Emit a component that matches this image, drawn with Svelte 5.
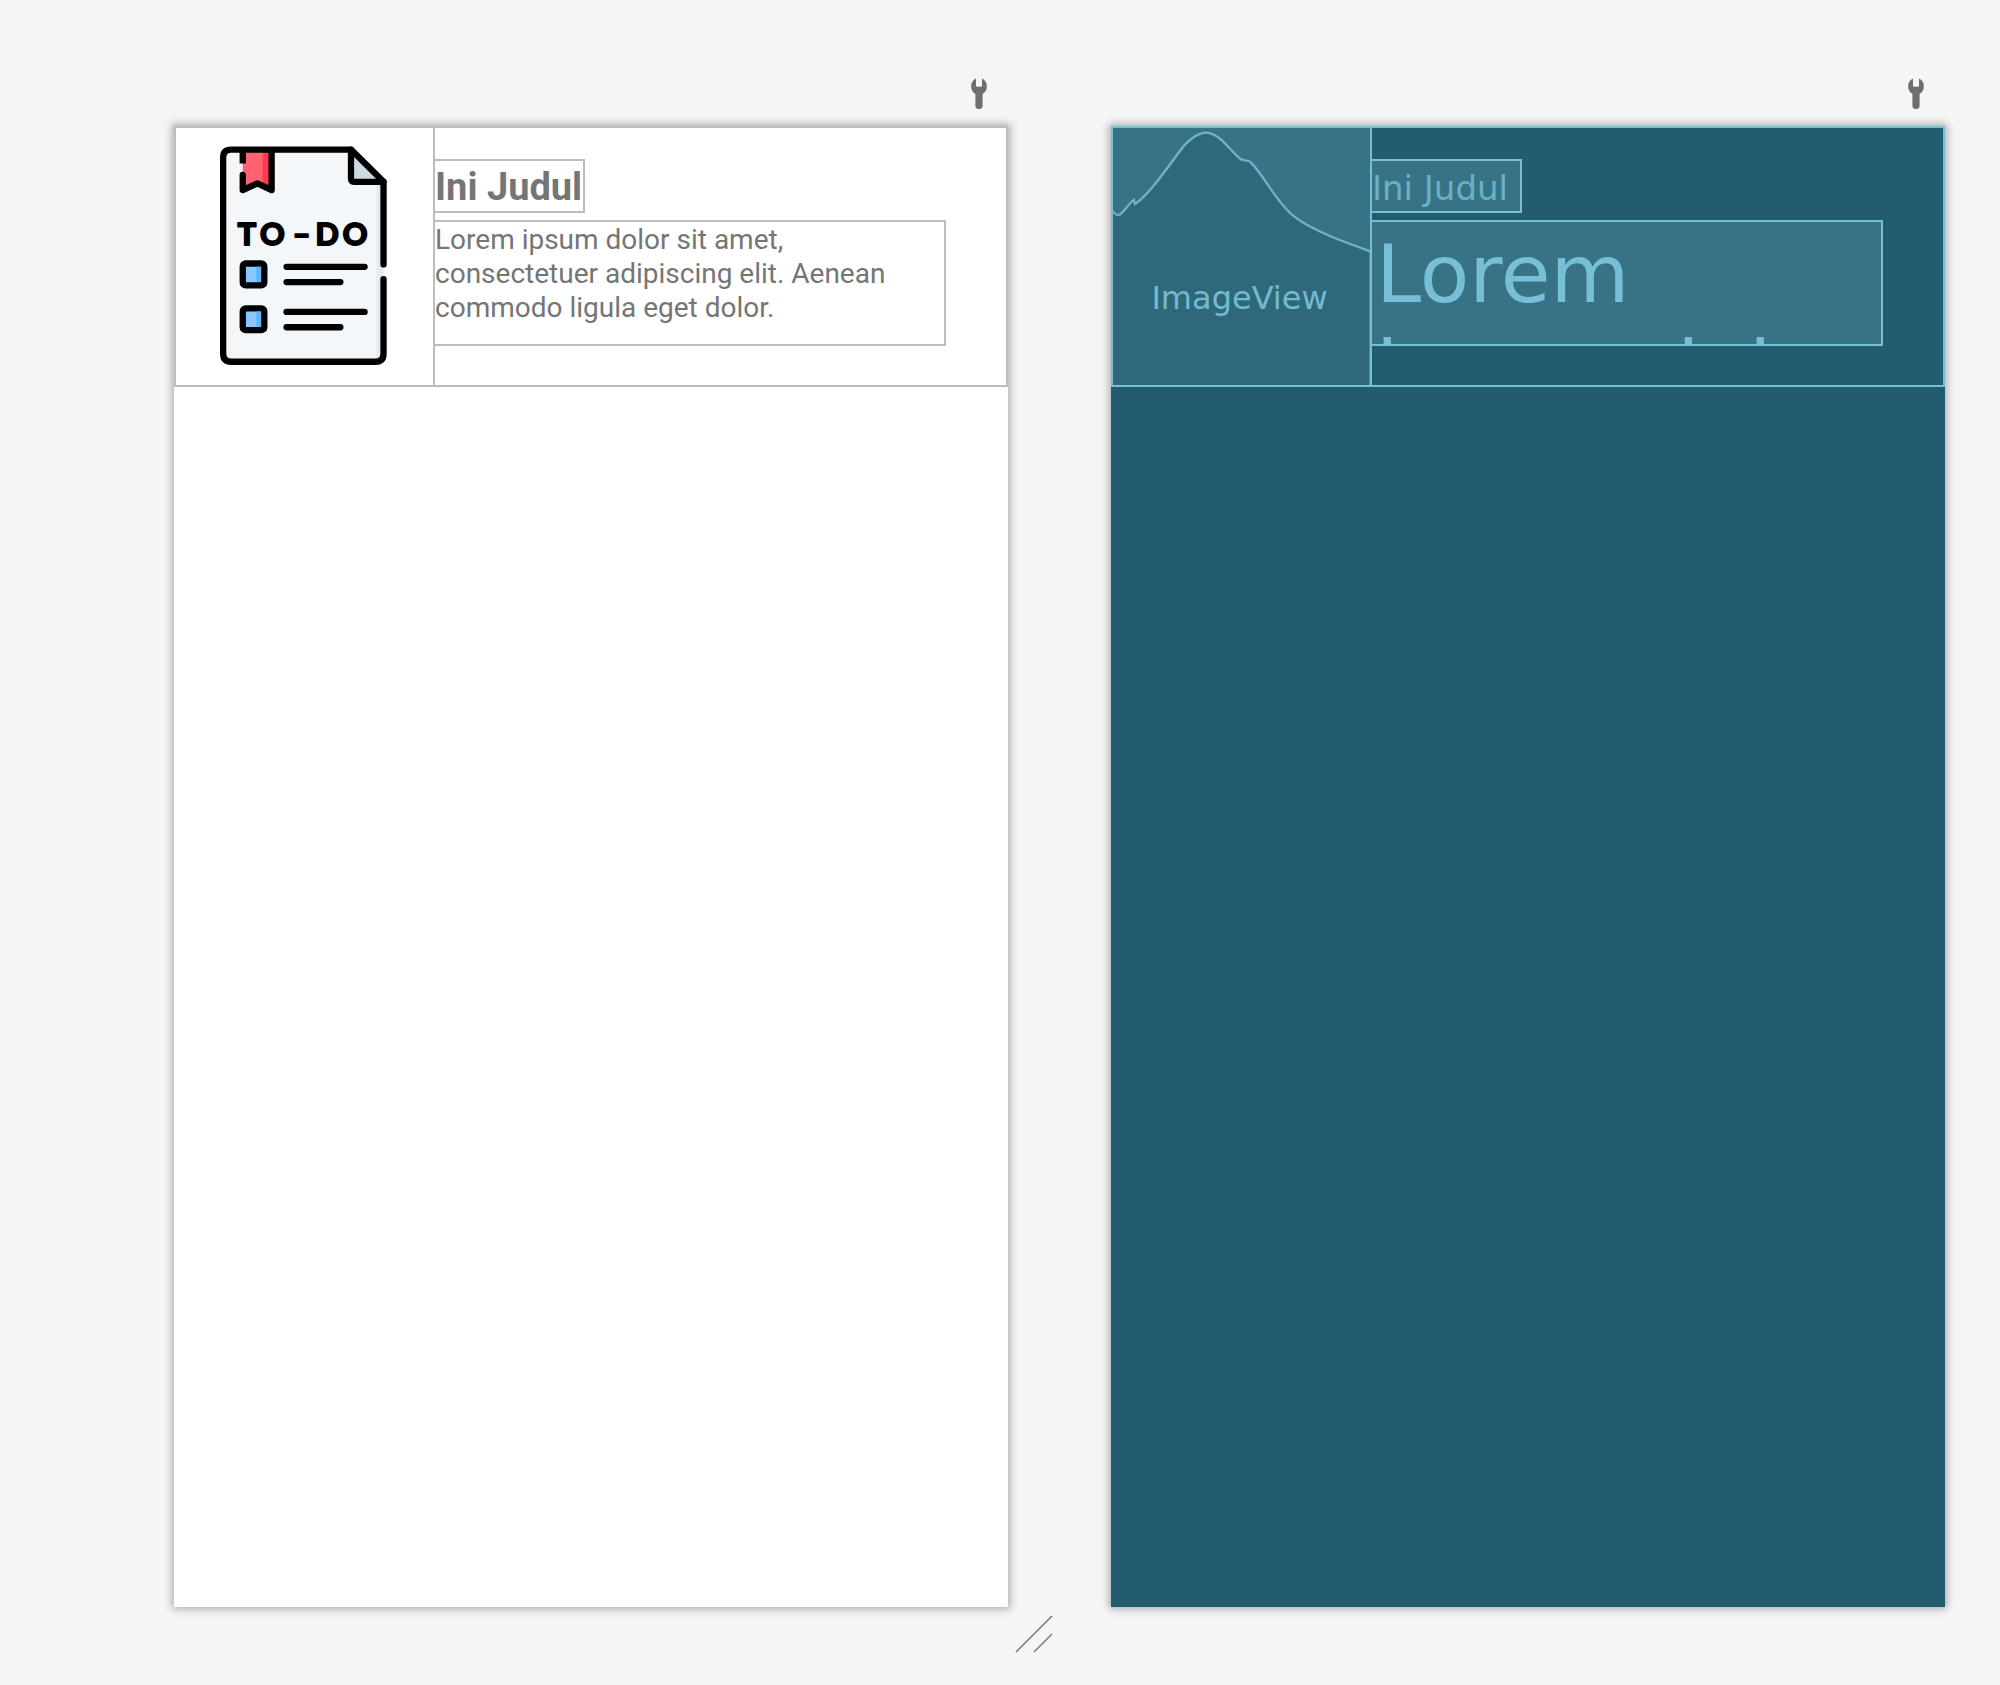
<script lang="ts">
  const title = 'Ini Judul';
  const description =
    'Lorem ipsum dolor sit amet, consectetuer adipiscing elit. Aenean commodo ligula eget dolor.';
</script>

{#snippet wrench()}
  <button class="tool" type="button" aria-label="View options">
    <svg viewBox="0 0 18 31" aria-hidden="true">
      <path
        fill="#6e6e6e"
        d="M6 .6v7.200a1 1 0 0 0 1 1h4a1 1 0 0 0 1-1V.6a8.800 8.800 0 0 1 .6 15.400V27.500a3.600 3.600 0 0 1-7.200 0V16A8.800 8.800 0 0 1 6 .600z"
      />
    </svg>
  </button>
{/snippet}

<main class="surface">
  <section class="preview design" aria-label="Design">
    {@render wrench()}
    <div class="screen">
      <div class="item">
        <div class="image">
          <svg viewBox="48 53 774 774" role="img" aria-label="To-do list">
            <path fill="#f4f7f9" d="M212 118H575L673 215V730Q673 757 650 757H212Q190 757 190 735V140Q190 118 212 118Z" />
            <path fill="#e4eaf3" d="M652 215H673V757H652Z" />
            <path fill="#ff6470" d="M249 118H336V240L293 220L249 240Z" />
            <path fill="#fd3c4f" d="M309 118H336V240L309 226Z" />
            <path fill="#cdd9e3" d="M575 118V215H673Z" />
            <g fill="none" stroke="#000" stroke-width="19" stroke-linecap="round" stroke-linejoin="round">
              <path d="M673 464V215L575 118H214Q190 118 190 142V733Q190 757 214 757H649Q673 757 673 733V508" />
              <path d="M575 118V206Q575 215 584 215H673" />
              <path stroke-linecap="butt" d="M249 118V160" />
              <path d="M249 194V240L293 220L336 240V120" />
              <path d="M381 471H616M381 517H543M381 607H616M381 653H543" />
            </g>
            <g stroke="#000" stroke-width="19">
              <rect x="249" y="461" width="65" height="66" rx="9" fill="#8ac6ff" />
              <rect x="249" y="596" width="65" height="66" rx="9" fill="#8ac6ff" />
            </g>
            <path fill="#60b4ff" d="M290 471H304V517H290ZM290 606H304V652H290Z" />
            <text class="todo" x="234 301 400 468 550" y="404">TO–DO</text>
          </svg>
        </div>
        <div class="content">
          <h1 class="title">{title}</h1>
          <p class="description">{description}</p>
        </div>
      </div>
    </div>
  </section>

  <section class="preview blueprint" aria-label="Blueprint">
    {@render wrench()}
    <div class="screen">
      <div class="item">
        <div class="image">
          <svg class="wave" viewBox="41 53 768 770" aria-hidden="true">
            <path
              fill="#2f687a"
              stroke="#6cb3c9"
              stroke-width="7"
              d="M36 300C46 312 52 316 60 313C72 304 86 283 102 268L106 281C146 256 200 175 252 107C300 55 331 58 367 91C391 114 406 134 421 145C434 154 442 146 453 156C496 200 528 275 582 318C638 361 730 393 812 423V840H30Z"
            />
          </svg>
          <span class="label">ImageView</span>
        </div>
        <div class="content">
          <h1 class="title">{title}</h1>
          <p class="description">{description}</p>
        </div>
      </div>
    </div>
  </section>

  <svg class="resize" viewBox="0 0 38 38" aria-hidden="true">
    <path d="M1 37L37 1M19 37L37 19" stroke="#7a7a7a" stroke-width="1.5" />
  </svg>
</main>

<style>
  :global(body) {
    margin: 0;
    background: #f5f5f5;
  }
  .surface {
    position: relative;
    display: grid;
    grid-template-columns: 1fr 1fr;
    gap: 103px;
    box-sizing: border-box;
    min-height: 100vh;
    padding: 75px 55px 77px 174px;
    align-items: start;
  }
  .preview {
    display: flex;
    flex-direction: column;
    min-width: 0;
  }
  .tool {
    align-self: flex-end;
    margin: 0 20px 16px 0;
    padding: 2px 0 0;
    border: 0;
    background: none;
    height: 35px;
    width: 18px;
  }
  .tool svg {
    display: block;
    width: 18px;
    height: 31px;
  }
  .screen {
    box-sizing: border-box;
    aspect-ratio: 834 / 1481;
    background: #fff;
    box-shadow: 0 0 8px 2px rgba(0, 0, 0, 0.3);
  }
  .item {
    display: flex;
    border: 2px solid var(--line);
  }
  .image {
    position: relative;
    flex: none;
    width: 257px;
    height: 257px;
    border-right: 2px solid var(--line);
  }
  .image svg {
    display: block;
    width: 100%;
    height: 100%;
  }
  .content {
    flex: 1;
    min-width: 0;
    padding: 31px 60px 0 0;
  }
  .title,
  .description {
    box-sizing: border-box;
    margin: 0;
    border: 2px solid var(--line);
    border-left: 0;
    overflow: hidden;
  }
  .title {
    width: 150px;
    height: 54px;
    line-height: 52px;
    white-space: nowrap;
  }
  .description {
    height: 126px;
    margin-top: 7px;
  }
  .design {
    --line: #bdbdbd;
    color: #757575;
    font-family: Roboto, sans-serif;
  }
  .design .title {
    font-size: 38px;
    font-weight: 700;
  }
  .design .description {
    padding: 1px 40px 0 0;
    font-size: 28px;
    line-height: 34px;
  }
  .todo {
    font: 700 92px Lato, sans-serif;
    fill: #000;
    stroke: #000;
    stroke-width: 6px;
    stroke-linejoin: round;
  }
  .blueprint {
    --line: #76c0d6;
    color: #76bfd6;
    font-family: "DejaVu Sans", sans-serif;
  }
  .blueprint .screen {
    background: #235c6f;
  }
  .blueprint .image,
  .blueprint .title,
  .blueprint .description {
    background: #387385;
  }
  .blueprint .title {
    font-size: 34px;
    font-weight: 400;
    line-height: 54px;
    color: #68b0c7;
  }
  .blueprint .description {
    padding: 4px;
    font-size: 81px;
    line-height: 96px;
  }
  .label {
    position: absolute;
    inset: 152px 4px auto 0;
    text-align: center;
    font-size: 32px;
    line-height: 36px;
    color: #72bad0;
  }
  .resize {
    position: absolute;
    right: 947px;
    bottom: 32px;
    width: 38px;
    height: 38px;
  }
</style>
